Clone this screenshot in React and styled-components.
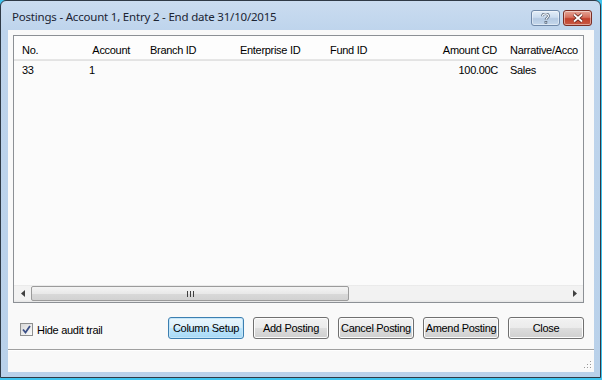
import React from 'react'
import styled, { createGlobalStyle } from 'styled-components'

const GlobalStyle = createGlobalStyle`
  html, body {
    margin: 0;
    padding: 0;
    background: #3ec3ee;
  }
  body {
    font-family: 'Liberation Sans', Arial, sans-serif;
  }
`

const Window = styled.div`
  box-sizing: border-box;
  width: 601px;
  height: 378px;
  border: 1px solid #2f3a46;
  border-radius: 6px 6px 0 0;
  background: linear-gradient(#cadcf0 0px, #bed4ec 30px, #b9d1ea 100%);
  display: flex;
  flex-direction: column;
`

const TitleBar = styled.div`
  height: 29px;
  flex: none;
  display: flex;
  align-items: center;
  padding: 0 8px 0 11px;
`

const Title = styled.div`
  flex: 1;
  font-family: 'Noto Sans', 'Open Sans', sans-serif;
  font-size: 11.5px;
  letter-spacing: -0.2px;
  color: #1b2433;
  margin-top: 2px;
`

const CaptionButtons = styled.div`
  align-self: flex-start;
  margin-top: 9px;
  display: flex;
  gap: 3px;
`

const CaptionButton = styled.div`
  box-sizing: border-box;
  width: 29px;
  height: 16px;
  border-radius: 3px;
  display: flex;
  align-items: center;
  justify-content: center;
  border: 1px solid ${p => (p.$close ? '#7a2d24' : '#6f88a8')};
  background: ${p =>
    p.$close
      ? 'linear-gradient(#e5a597 0%, #d6715f 45%, #c2402c 55%, #c85a44 100%)'
      : 'linear-gradient(#e4eef8 0%, #cbdcef 45%, #b4c9e2 55%, #c5d8ec 100%)'};
  box-shadow: inset 0 0 0 1px rgba(255, 255, 255, 0.45);
`

const Client = styled.div`
  flex: 1;
  margin: 0 6px 5px 7px;
  background: #f9f9f9;
  display: flex;
  flex-direction: column;
`

const ListView = styled.div`
  box-sizing: border-box;
  height: 268px;
  margin: 5px 10px 0 5px;
  border: 1px solid #8c9095;
  background: #fbfbfb;
  display: flex;
  flex-direction: column;
  overflow: hidden;
  font-size: 11px;
  letter-spacing: -0.3px;
  color: #000;
`

const Grid = styled.div`
  display: grid;
  grid-template-columns: 68px 61px 90px 90px 90px 90px 76px;
  width: max-content;
`

const HeaderRow = styled(Grid)`
  height: 24px;
  border-bottom: 1px solid #e3e3e3;
  background: #fdfdfd;
`

const HeaderCell = styled.div`
  display: flex;
  align-items: center;
  justify-content: ${p => (p.$right ? 'flex-end' : 'flex-start')};
  padding: ${p => (p.$right ? `0 ${p.$pad}px 0 0` : `0 0 0 ${p.$pad}px`)};
  padding-top: 3px;
  white-space: nowrap;
  box-shadow: inset -1px -6px 0 -5px #e6e6e6;
`

const DataRow = styled(Grid)`
  height: 18px;
`

const DataCell = styled.div`
  display: flex;
  align-items: center;
  justify-content: ${p => (p.$right ? 'flex-end' : 'flex-start')};
  padding: ${p => (p.$right ? `0 ${p.$pad}px 0 0` : `0 0 0 ${p.$pad}px`)};
  white-space: nowrap;
`

const ListBody = styled.div`
  flex: 1;
`

const HScroll = styled.div`
  height: 17px;
  flex: none;
  display: flex;
  align-items: stretch;
  background: linear-gradient(#e3e3e3 0px, #f2f2f2 1px, #f2f2f2 15px, #e8e8e8 16px);
`

const ArrowBox = styled.div`
  width: 17px;
  display: flex;
  align-items: center;
  justify-content: center;
`

const Track = styled.div`
  flex: 1;
  display: flex;
  align-items: center;
`

const Thumb = styled.div`
  box-sizing: border-box;
  width: 318px;
  height: 15px;
  border: 1px solid #9b9b9b;
  border-radius: 2px;
  background: linear-gradient(#f4f4f4 0%, #e9e9e9 50%, #d9d9d9 51%, #d2d2d2 100%);
  display: flex;
  align-items: center;
  justify-content: center;
`

const Grip = styled.div`
  width: 7px;
  height: 6px;
  background: repeating-linear-gradient(90deg, #3f3f3f 0 1px, transparent 1px 3px);
`

const Footer = styled.div`
  height: 22px;
  margin: 14px 10px 0 13px;
  display: flex;
  align-items: center;
  gap: 9px;
  font-size: 11px;
  letter-spacing: -0.3px;
`

const CheckLabel = styled.label`
  display: flex;
  align-items: center;
  gap: 4px;
  flex: 1;
  color: #000;
  margin-top: 3px;
  margin-left: -1px;
`

const CheckBox = styled.span`
  box-sizing: border-box;
  width: 13px;
  height: 13px;
  border: 1px solid #8e8f8f;
  background: linear-gradient(135deg, #d8d8d8, #fbfbfb);
  display: flex;
  align-items: center;
  justify-content: center;
`

const Button = styled.button`
  box-sizing: border-box;
  width: 76px;
  height: 22px;
  padding: 0;
  border-radius: 3px;
  font-family: 'Liberation Sans', Arial, sans-serif;
  font-size: 11px;
  letter-spacing: -0.3px;
  color: #000;
  border: 1px solid ${p => (p.$focused ? '#3c7fb1' : '#707070')};
  background: ${p =>
    p.$focused
      ? 'linear-gradient(#eaf6fd 0%, #d9f0fc 50%, #bee6fd 51%, #a7d9f5 100%)'
      : 'linear-gradient(#f2f2f2 0%, #ebebeb 50%, #dddddd 51%, #cfcfcf 100%)'};
  box-shadow: inset 0 0 0 1px ${p => (p.$focused ? '#c6e6f8' : '#fcfcfc')};
`

const Separator = styled.div`
  margin-top: 10px;
  height: 1px;
  border-bottom: 1px solid #ffffff;
  background: #a0a0a0;
`

const StatusArea = styled.div`
  flex: 1;
  display: flex;
  justify-content: flex-end;
  align-items: flex-end;
  padding: 0 2px 1px 0;
`

const columns = [
  { label: 'No.', pad: 8 },
  { label: 'Account', pad: 13, right: true },
  { label: 'Branch ID', pad: 7 },
  { label: 'Enterprise ID', pad: 7 },
  { label: 'Fund ID', pad: 7 },
  { label: 'Amount CD', pad: 6, right: true },
  { label: 'Narrative/Acco', pad: 7 }
]

const rows = [
  [
    { v: '33', pad: 8 },
    { v: '1', pad: 7 },
    { v: '', pad: 7 },
    { v: '', pad: 7 },
    { v: '', pad: 7 },
    { v: '100.00C', pad: 5, right: true },
    { v: 'Sales', pad: 7 }
  ]
]

const buttons = ['Column Setup', 'Add Posting', 'Cancel Posting', 'Amend Posting', 'Close']

export default function App() {
  return (
    <>
      <GlobalStyle />
      <Window>
        <TitleBar>
          <Title>Postings - Account 1, Entry 2 - End date 31/10/2015</Title>
          <CaptionButtons>
            <CaptionButton>
              <svg width="9" height="11" viewBox="0 0 9 11">
                <path
                  d="M1.5 3.2 C1.5 1.2 3 0.8 4.5 0.8 C6.2 0.8 7.5 1.6 7.5 3.1 C7.5 4.6 5 5 5 6.8"
                  fill="none"
                  stroke="#4a5a6e"
                  strokeWidth="2.6"
                />
                <path
                  d="M1.5 3.2 C1.5 1.2 3 0.8 4.5 0.8 C6.2 0.8 7.5 1.6 7.5 3.1 C7.5 4.6 5 5 5 6.8"
                  fill="none"
                  stroke="#f4f7fb"
                  strokeWidth="1.2"
                />
                <rect x="3.6" y="8" width="2.6" height="2.6" fill="#4a5a6e" />
                <rect x="4.3" y="8.7" width="1.2" height="1.2" fill="#f4f7fb" />
              </svg>
            </CaptionButton>
            <CaptionButton $close>
              <svg width="12" height="10" viewBox="0 0 12 10">
                <path d="M2 1.5 L10 8.5 M10 1.5 L2 8.5" stroke="#5a1f18" strokeWidth="3.4" />
                <path d="M2 1.5 L10 8.5 M10 1.5 L2 8.5" stroke="#ffffff" strokeWidth="1.8" />
              </svg>
            </CaptionButton>
          </CaptionButtons>
        </TitleBar>
        <Client>
          <ListView>
            <HeaderRow>
              {columns.map(c => (
                <HeaderCell key={c.label} $right={c.right} $pad={c.pad}>
                  {c.label}
                </HeaderCell>
              ))}
            </HeaderRow>
            <ListBody>
              {rows.map((r, i) => (
                <DataRow key={i}>
                  {r.map((c, j) => (
                    <DataCell key={j} $right={c.right} $pad={c.pad}>
                      {c.v}
                    </DataCell>
                  ))}
                </DataRow>
              ))}
            </ListBody>
            <HScroll>
              <ArrowBox>
                <svg width="4" height="7" viewBox="0 0 4 7">
                  <path d="M4 0 L0 3.5 L4 7 Z" fill="#404040" />
                </svg>
              </ArrowBox>
              <Track>
                <Thumb>
                  <Grip />
                </Thumb>
              </Track>
              <ArrowBox>
                <svg width="4" height="7" viewBox="0 0 4 7">
                  <path d="M0 0 L4 3.5 L0 7 Z" fill="#404040" />
                </svg>
              </ArrowBox>
            </HScroll>
          </ListView>
          <Footer>
            <CheckLabel>
              <CheckBox>
                <svg width="9" height="9" viewBox="0 0 9 9">
                  <path d="M1 4.5 L3.5 7.5 L8 1" fill="none" stroke="#3b4f86" strokeWidth="1.8" />
                </svg>
              </CheckBox>
              Hide audit trail
            </CheckLabel>
            {buttons.map((b, i) => (
              <Button key={b} $focused={i === 0}>
                {b}
              </Button>
            ))}
          </Footer>
          <Separator />
          <StatusArea>
            <svg width="10" height="10" viewBox="0 0 10 10">
              {[
                [8, 0],
                [8, 3],
                [5, 3],
                [8, 6],
                [5, 6],
                [2, 6]
              ].map(([x, y]) => (
                <g key={`${x}-${y}`}>
                  <rect x={x + 1} y={y + 1} width="1" height="1" fill="#ffffff" />
                  <rect x={x} y={y} width="1" height="1" fill="#9a9a9a" />
                </g>
              ))}
            </svg>
          </StatusArea>
        </Client>
      </Window>
    </>
  )
}
